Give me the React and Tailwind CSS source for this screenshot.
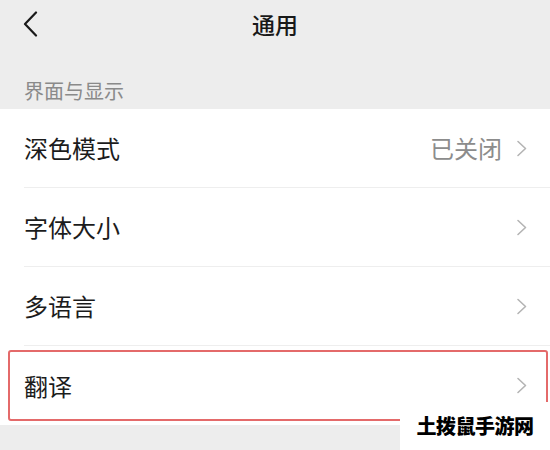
import React from 'react';

const items = [
    { label: '深色模式', value: '已关闭' },
    { label: '字体大小' },
    { label: '多语言' },
    { label: '翻译' },
];

const Chevron = () => (
    <svg width="12" height="17" viewBox="0 0 12 17" fill="none">
        <path d="M2 1.5 L9.5 8.5 L2 15.5" stroke="#b4b4b4" strokeWidth="1.6" strokeLinecap="round" strokeLinejoin="round" />
    </svg>
);

const App = () => {
    return (
        <div
            className="w-[550px] h-[450px] bg-[#ededed] relative overflow-hidden"
            style={{ fontFamily: '"Noto Sans CJK SC", "Noto Sans", sans-serif' }}
        >
            {/* top bar */}
            <div className="h-[48px] flex items-center justify-center relative">
                <div className="absolute left-[22px] top-[11px]">
                    <svg width="18" height="27" viewBox="0 0 18 27" fill="none">
                        <path d="M14 1.5 L3 13 L14 24.5" stroke="#1a1a1a" strokeWidth="2.2" strokeLinecap="round" strokeLinejoin="round" />
                    </svg>
                </div>
                <h1 className="text-[23px] leading-[30px] font-medium text-[#191919]">通用</h1>
            </div>

            {/* section label */}
            <div className="h-[61px] pt-[29px] px-6 text-[20px] leading-[28px] text-[#8a8a8a]">
                界面与显示
            </div>

            {/* list */}
            <div className="bg-white">
                {items.map((item, i) => (
                    <div key={item.label} className="pl-6">
                        <div
                            className={
                                i < items.length - 1
                                    ? 'h-[79px] flex items-center pr-[22px] border-b border-[#eeeeee]'
                                    : 'h-[79px] flex items-center pr-[22px]'
                            }
                        >
                            <span className="flex-1 text-[24px] leading-[32px] text-[#1c1c1c]">{item.label}</span>
                            {item.value && (
                                <span className="text-[24px] leading-[32px] text-[#8c8c8c] mr-[14px]">{item.value}</span>
                            )}
                            <Chevron />
                        </div>
                    </div>
                ))}
            </div>

            {/* highlight annotation */}
            <div className="absolute left-[8px] top-[350px] w-[540px] h-[71px] border-2 border-[#e46a6a] rounded-[3px]" />

            {/* watermark */}
            <div className="absolute right-0 bottom-0 w-[150px] h-[48px] bg-white flex items-center justify-center">
                <span className="text-[20px] leading-[24px] font-black text-black tracking-[-0.5px]">土拨鼠手游网</span>
            </div>
        </div>
    );
};

export default App;
